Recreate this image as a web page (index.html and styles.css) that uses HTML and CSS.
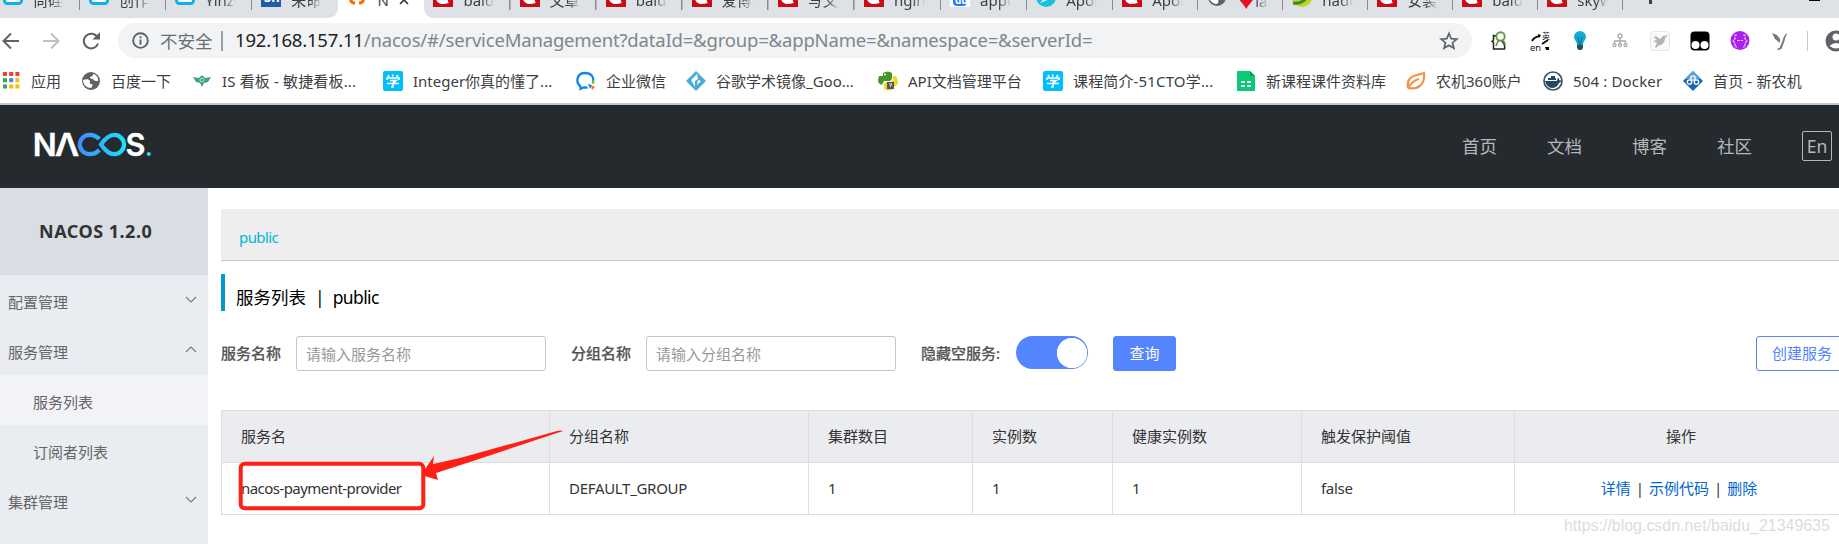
FILE: index.html
```html
<!DOCTYPE html>
<html lang="zh-CN">
<head>
<meta charset="utf-8">
<title>Nacos</title>
<link rel="stylesheet" href="styles.css">
</head>
<body>
<svg class="defs" width="0" height="0">
  <defs>
    <symbol id="card" viewBox="0 0 20 20"><rect x="1.5" y="1.5" width="17" height="17" rx="3" fill="#fff" stroke="#0db1ed" stroke-width="3"/></symbol>
    <symbol id="csdn" viewBox="0 0 20 20"><rect width="20" height="20" fill="#ca0c16"/><path d="M15 7C7 4 5 8 5 11c0 4 4 5 10 3" fill="none" stroke="#fff" stroke-width="4"/></symbol>
    <symbol id="study" viewBox="0 0 20 20"><rect width="20" height="20" rx="2" fill="#00bfff"/><path d="M5 4l1 2M9.500 3.500l.5 2M15 4l-1.500 2M4 9V7h12v2M7 9.500h6l-3 2.500v4H8M4 12.500h12" fill="none" stroke="#fff" stroke-width="1.700"/></symbol>
    <symbol id="globe" viewBox="0 0 20 20"><circle cx="10" cy="10" r="9" fill="#5f6368"/><path d="M2 9c3-1 6-1 7 1 0 2-1 2 1 3 2 0 2 2 0 4-5 0-8-4-8-8zM12 3c0 2-1 2-3 3 0 2 2 2 3 2 1 2 3 2 5 2 1-3-2-7-5-7z" fill="#fff"/></symbol>
  </defs>
</svg>

<div class="tabs">
  <div class="tab"><svg class="fav"><use href="#card"/></svg><span>尚硅谷</span></div>
  <div class="tab"><svg class="fav"><use href="#card"/></svg><span>创作中</span></div>
  <div class="tab"><svg class="fav"><use href="#card"/></svg><span>Yinzo</span></div>
  <div class="tab last"><svg class="fav low" viewBox="0 0 20 20"><rect width="20" height="20" fill="#1f5ea8"/><text x="3" y="15" font-size="13" font-weight="700" fill="#fff">Sn</text></svg><span>未命名</span></div>
  <div class="tab active"><svg class="fav" viewBox="0 0 20 20"><path d="M7 2H5v5l-3 3 2 6q1 2 4 2M13 2h2v5l3 3-2 6q-1 2-4 2" fill="none" stroke="#ff6a00" stroke-width="3"/></svg><span class="name">N</span><svg class="close" viewBox="0 0 10 10"><path d="M1 1l8 8M9 1l-8 8" stroke="#333" stroke-width="1.600"/></svg></div>
  <div class="tab first"><svg class="fav low"><use href="#csdn"/></svg><span>baidu_</span></div>
  <div class="tab"><svg class="fav low"><use href="#csdn"/></svg><span>文章管</span></div>
  <div class="tab"><svg class="fav low"><use href="#csdn"/></svg><span>baidu</span></div>
  <div class="tab"><svg class="fav low"><use href="#csdn"/></svg><span>爱博文</span></div>
  <div class="tab"><svg class="fav low"><use href="#csdn"/></svg><span>写文章</span></div>
  <div class="tab"><svg class="fav low"><use href="#csdn"/></svg><span>nginx</span></div>
  <div class="tab"><svg class="fav low" viewBox="0 0 20 20"><rect width="20" height="20" fill="#fff"/><rect x="3" y="7" width="14" height="12" rx="4" fill="#2979ff"/><text x="5" y="17" font-size="10" font-weight="700" fill="#fff">du</text></svg><span>appoll</span></div>
  <div class="tab"><svg class="fav low" viewBox="0 0 20 20"><circle cx="10" cy="10" r="10" fill="#12c2e0"/><path d="M4 16L15 5l2 6-8 3z" fill="#fff"/></svg><span>Apollo</span></div>
  <div class="tab short"><svg class="fav low"><use href="#csdn"/></svg><span>Apollo</span></div>
  <div class="tab short"><svg class="fav low"><use href="#globe"/></svg><span><i class="gem">♦</i>lan</span></div>
  <div class="tab short"><svg class="fav low" viewBox="0 0 20 20"><circle cx="10" cy="10" r="10" fill="#c2d321"/><path d="M1 16c8 1 13-3 15-9" fill="none" stroke="#3c8c2c" stroke-width="3"/></svg><span>hadoo</span></div>
  <div class="tab short"><svg class="fav low"><use href="#csdn"/></svg><span>安装j</span></div>
  <div class="tab short"><svg class="fav low"><use href="#csdn"/></svg><span>baidu</span></div>
  <div class="tab short"><svg class="fav low"><use href="#csdn"/></svg><span>skywa</span></div>
  <div class="newtab"></div>
  <div class="minimize"></div>
</div>

<div class="toolbar">
  <div class="nav">
    <svg viewBox="0 0 20 20"><path d="M18 10H3M10 2.500L2.500 10l7.500 7.500" fill="none" stroke="#5f6368" stroke-width="2"/></svg>
    <svg viewBox="0 0 20 20"><path d="M2 10h15M10 2.500l7.500 7.500-7.500 7.500" fill="none" stroke="#bdc1c6" stroke-width="2"/></svg>
    <svg viewBox="0 0 20 20"><path d="M16.500 6.500A7.300 7.300 0 1 0 17 12.500" fill="none" stroke="#5f6368" stroke-width="2"/><path d="M19 1v7.500h-7.500z" fill="#5f6368"/></svg>
  </div>
  <div class="omnibox">
    <svg class="info" viewBox="0 0 16 16"><circle cx="8" cy="8" r="6.900" fill="none" stroke="#5f6368" stroke-width="1.800"/><path d="M8 7v5M8 4v1.800" stroke="#5f6368" stroke-width="1.800"/></svg>
    <span class="insecure">不安全</span>
    <span class="divider"></span>
    <span class="url"><b>192.168.157.11</b>/nacos/#/serviceManagement?dataId=&amp;group=&amp;appName=&amp;namespace=&amp;serverId=</span>
    <svg class="star" viewBox="0 0 20 20"><path d="M10 2.500l2.200 5.200 5.600.4-4.300 3.600 1.400 5.500-4.900-3-4.900 3 1.400-5.500L2.200 8.100l5.600-.4z" fill="none" stroke="#5f6368" stroke-width="1.700"/></svg>
  </div>
  <div class="extensions">
    <svg viewBox="0 0 20 20"><path d="M6 5L3.500 4.500v4.500L2 10.500l1.500 1V18H14.500q1-5-3-8" fill="none" stroke="#222" stroke-width="1.500"/><circle cx="10.500" cy="5.500" r="4.200" fill="#fff" stroke="#64973c" stroke-width="1.900"/><path d="M8.500 9L6 15M13 9l2.500 5" stroke="#64973c" stroke-width="1.700"/></svg>
    <svg viewBox="0 0 20 20"><text x="0" y="19.500" font-size="9.500" fill="#111">en</text><text x="12" y="7.500" font-size="8" fill="#111">英</text><path d="M2 10q2-4 8-5M12 13l6-4" fill="none" stroke="#111" stroke-width="2"/><path d="M8 3l3 1-2 3zM15 16h4v3h-3z"/></svg>
    <svg viewBox="0 0 20 20"><path d="M10 0a6 6 0 0 1 6 6c0 3-3 4-3 8H7c0-4-3-5-3-8a6 6 0 0 1 6-6z" fill="#10aad4"/><path d="M7 14h6v3l-1.500 2h-3L7 17z" fill="#285365"/><path d="M8 6l1.500 8M12 6l-1.500 8" stroke="#16627d"/></svg>
    <svg viewBox="0 0 20 20"><g fill="none" stroke="#aaa" stroke-width="1.300"><circle cx="10" cy="5" r="2"/><path d="M10 7v6M4.500 13v-3h11v3"/><circle cx="4.500" cy="14" r="1.500"/><circle cx="10" cy="14" r="1.500"/><circle cx="15.500" cy="14" r="1.500"/></g></svg>
    <svg viewBox="0 0 20 20"><rect x=".5" y=".5" width="19" height="19" rx="3" fill="#fbfbfb" stroke="#e5e5e5"/><path d="M3 3l7 5 3-3 5-1-3 3c0 5-3 7-7 8l-2 2-1-1 2-4-4-2 4-1-4-3h3z" fill="#b4b4b4"/></svg>
    <svg viewBox="0 0 20 20"><rect x=".5" y=".5" width="19" height="19" rx="4" fill="#000"/><circle cx="5.500" cy="14" r="4" fill="#fff"/><circle cx="14.500" cy="14" r="4" fill="#fff"/></svg>
    <svg viewBox="0 0 20 20"><circle cx="10" cy="9.500" r="9.500" fill="#ac20ef"/><path d="M7 4H5v4l-2 2 2 2v4h2M13 4h2v4l2 2-2 2v4h-2M7 9.500h6" fill="none" stroke="#edc6ff" stroke-width="1.200" stroke-dasharray="3 1"/></svg>
    <svg viewBox="0 0 20 20"><path d="M2 2l5 2 3 4v4L5 8zM17.500 2q-4 2-5 8l-3 7-3 1 2 1 3-1 3-8q1-5 3-8z" fill="#777"/></svg>
  </div>
  <span class="rule"></span>
  <svg class="avatar" viewBox="0 0 22 22"><circle cx="11" cy="11" r="10.500" fill="#5f6368"/><circle cx="11" cy="7" r="3.500" fill="#fff"/><path d="M4.500 16q6.500-6 13 0-6 5-13 0z" fill="#fff"/></svg>
</div>

<div class="bookmarks">
  <div><svg class="apps" viewBox="0 0 20 20"><path d="M0 3h16.400" stroke="#ea4335" stroke-width="4" stroke-dasharray="4 2.200"/><path d="M0 9.200h4M0 15.400h4" stroke="#34a853" stroke-width="4"/><path d="M6.200 9.200h4" stroke="#4285f4" stroke-width="4"/><path d="M12.400 9.200h4M6.200 15.400h4M12.400 15.400h4" stroke="#fbbc05" stroke-width="4"/></svg>应用</div>
  <div><svg><use href="#globe"/></svg>百度一下</div>
  <div><svg viewBox="0 0 20 20"><path d="M1 6l6 1q3-5 6 0l6-1-3 5-4 1-2 4-2-4-4-1z" fill="#3da57d"/><circle cx="10" cy="9" r="2" fill="none" stroke="#bce0d0"/></svg><span class="wide">IS 看板 - 敏捷看板...</span></div>
  <div><svg><use href="#study"/></svg>Integer你真的懂了...</div>
  <div><svg viewBox="0 0 20 20"><path d="M4.500 15.500C-1 11 1 2 9 2c6 0 9 4 8 8M4.500 15v3l3-1.500h4" fill="none" stroke="#1485ee" stroke-width="2.300"/><path d="M16 8l3 4-3 1z" fill="#6cc21c"/><path d="M12 13l4 1-2 4z" fill="#138bed"/><path d="M15 14l4 2-3 3z" fill="#ff6c22"/></svg>企业微信</div>
  <div><svg viewBox="0 0 20 20"><path d="M10 0l10 10-10 10L0 10z" fill="#4aaad8"/><path d="M11 3L5 9l4 7V10l3-2zM12 9l3 1-4 4z" fill="#fff"/></svg><span>谷歌学术镜像_Goo...</span></div>
  <div><svg viewBox="0 0 20 20"><path d="M5 5V2q5-3 9 0v6l-2 2H6l-2 4Q0 13 0 9l1-4z" fill="#42992b"/><path d="M15 5h3q4 7 0 10h-3v3q-4 3-9 0v-5l2-2h5l2-2z" fill="#f4d52e"/><path d="M9 11h7v7H9z" fill="#555"/><path d="M11 13h3l-2 3" fill="none" stroke="#eee"/><circle cx="7" cy="3.500" r="1" fill="#fff"/></svg><span>API文档管理平台</span></div>
  <div><svg><use href="#study"/></svg><span class="wide">课程简介-51CTO学...</span></div>
  <div><svg viewBox="0 0 20 20"><path d="M0 0h13l5 5v15H0z" fill="#0acb75"/><path d="M13 0l5 5h-5z" fill="#07a35d"/><path d="M4 11h4m2 0h4M4 15h4m2 0h4" stroke="#fff" stroke-width="2"/></svg><span class="shift">新课程课件资料库</span></div>
  <div><svg viewBox="0 0 20 20"><path d="M2 17C0 4 10 5 18 2c1 11-5 17-16 15M2 17c3-5 7-8 11-9" fill="none" stroke="#f49345" stroke-width="2.200"/></svg><span>农机360账户</span></div>
  <div><svg viewBox="0 0 20 20"><circle cx="10" cy="10" r="9" fill="#fff" stroke="#385466" stroke-width="1.700"/><path d="M2 10h12q0-3 2-3v2l3 1-3 2q-2 5-7 5-5 0-7-7z" fill="#24495f"/><path d="M5 8h8M8 6h4" stroke="#24495f" stroke-width="2"/></svg><span class="wide">504 : Docker</span></div>
  <div><svg viewBox="0 0 20 20"><path d="M10 0l10 10-10 10L0 10z" fill="#1967b0"/><path d="M2 8l8-8 8 8z" fill="#59a6db"/><g fill="none" stroke="#fff" stroke-width="1.300"><circle cx="10" cy="7" r="2.200"/><circle cx="6.500" cy="11" r="2.200"/><circle cx="13.500" cy="11" r="2.200"/></g></svg><span class="wide">首页 - 新农机</span></div>
</div>

<header class="header">
  <svg class="logo" viewBox="0 0 118 28">
    <defs><linearGradient id="flow" gradientUnits="userSpaceOnUse" x1="44" y1="0" x2="92" y2="0"><stop offset="0" stop-color="#4289ff"/><stop offset="1" stop-color="#18e5f6"/></linearGradient></defs>
    <g class="letters"><text x="-1.300" y="26" textLength="24" lengthAdjust="spacingAndGlyphs">N</text><text x="20.800" y="26" textLength="24.500" lengthAdjust="spacingAndGlyphs">Λ</text><text x="91.500" y="26" textLength="20" lengthAdjust="spacingAndGlyphs">S</text></g>
    <path d="M65.300 9C62.500 6 59.500 4.800 55.500 4.800a9.700 9.700 0 0 0 0 19.400c4 0 7-1.200 9.800-4.200M67 14.500q6.500-9.700 13.300-9.700a9.700 9.700 0 0 1 0 19.400q-6.800 0-13.300-9.700z" fill="none" stroke="url(#flow)" stroke-width="4.200"/>
    <circle cx="114.800" cy="24" r="2.100" fill="#18e5f6"/>
  </svg>
  <nav class="links"><a>首页</a><a>文档</a><a>博客</a><a>社区</a><a class="lang">En</a></nav>
</header>

<div class="layout">
  <aside class="sidebar">
    <h1>NACOS 1.2.0</h1>
    <div class="item">配置管理<svg viewBox="0 0 12 8"><path d="M1 1l5 5 5-5"/></svg></div>
    <div class="item">服务管理<svg viewBox="0 0 12 8"><path d="M1 6l5-5 5 5"/></svg></div>
    <div class="item sub current">服务列表</div>
    <div class="item sub">订阅者列表</div>
    <div class="item">集群管理<svg viewBox="0 0 12 8"><path d="M1 1l5 5 5-5"/></svg></div>
  </aside>
  <main class="main">
    <div class="namespace">public</div>
    <h2 class="title"><span>服务列表</span><i>|</i><span class="scope">public</span></h2>
    <form class="search">
      <label>服务名称</label><input placeholder="请输入服务名称">
      <label class="next">分组名称</label><input placeholder="请输入分组名称">
      <label class="next hide">隐藏空服务:</label><span class="switch"></span>
      <button class="query" type="button">查询</button>
      <button class="create" type="button">创建服务</button>
    </form>
    <div class="tablebox">
      <table>
        <colgroup><col class="c1"><col class="c2"><col class="c3"><col class="c4"><col class="c5"><col class="c6"><col class="c7"></colgroup>
        <tr><th>服务名</th><th>分组名称</th><th>集群数目</th><th>实例数</th><th>健康实例数</th><th>触发保护阈值</th><th class="ops">操作</th></tr>
        <tr><td><span class="service">nacos-payment-provider</span></td><td><span class="group">DEFAULT_GROUP</span></td><td>1</td><td>1</td><td>1</td><td><span class="group">false</span></td><td class="ops"><a>详情</a><i>|</i><a>示例代码</a><i>|</i><a>删除</a></td></tr>
      </table>
    </div>
  </main>
</div>
<svg class="marker" viewBox="0 0 340 100"><rect x="10.700" y="43.700" width="182.600" height="44.600" rx="4" fill="none" stroke="#ff2015" stroke-width="4"/><path d="M333 11q-2-1-6 0L230 38l-27 6 1-8-13 19 17 5-2-7 37-12z" fill="#ff2015"/></svg>
<div class="watermark">https://blog.csdn.net/baidu_21349635</div>
</body>
</html>
```
FILE: styles.css
```css
* { box-sizing: border-box; }
body { margin: 0; width: 1839px; height: 544px; overflow: hidden; position: relative; background: #fff; color: #333; font: 15px/20px "Noto Sans", "Noto Sans CJK SC", sans-serif; }
i { font-style: normal; }
svg { flex: none; }
.defs { position: absolute; }

.tabs { display: flex; height: 18px; background: #dee1e6; overflow: hidden; }
.tab { display: flex; flex: none; width: 86.100px; height: 18px; padding-left: 9px; overflow: hidden; background: linear-gradient(#888c91, #888c91) right top / 1.500px 10px no-repeat; font-size: 15px; }
.tab:first-child { margin-left: -6px; }
.tab.short { width: 85px; }
.tab.last { background: radial-gradient(circle at 0 0, transparent 8.500px, #fff 9px) right bottom / 9px 9px no-repeat; }
.tab.active { background: #fff; }
.tab.first { background: linear-gradient(#888c91, #888c91) right top / 1.500px 10px no-repeat, radial-gradient(circle at 100% 0, transparent 8.500px, #fff 9px) left bottom / 9px 9px no-repeat; }
.fav { width: 20px; height: 20px; margin: -15px 10px 0 0; }
.fav.low { margin-top: -13px; }
.tab span { width: 31px; height: 22px; margin-top: -10px; line-height: 20px; overflow: hidden; white-space: nowrap; color: #3c4043; -webkit-mask-image: linear-gradient(90deg, #000 60%, transparent); mask-image: linear-gradient(90deg, #000 60%, transparent); }
.tab .name { width: 16px; -webkit-mask-image: none; mask-image: none; }
.gem { color: #e81123; font-size: 18px; }
.close { width: 10px; height: 10px; margin: -5px 0 0 6px; }
.newtab { width: 3px; height: 4px; margin-left: 26px; background: #3c4043; }
.minimize { width: 11px; height: 1px; margin-left: 157px; background: #000; }

.toolbar { display: flex; align-items: center; height: 45px; }
.nav { display: flex; flex: none; gap: 20px; width: 118px; padding-left: 1px; }
.nav svg { width: 20px; height: 20px; }
.omnibox { display: flex; flex: none; align-items: center; width: 1354px; height: 35px; border-radius: 18px; background: #f1f3f4; padding: 0 13px 0 14px; font-size: 18.500px; line-height: 30px; color: #80868b; }
.info { width: 17px; height: 17px; }
.insecure { width: 52px; margin-left: 11px; font-size: 17.500px; color: #6a6e73; white-space: nowrap; }
.divider { width: 2px; height: 20px; margin: 0 12px 0 9px; background: #9aa0a6; }
.url { flex: 1; white-space: nowrap; letter-spacing: -0.180px; margin-top: -2px; }
.url b { font-weight: 400; color: #202124; }
.star { width: 20px; height: 20px; }
.extensions { display: flex; flex: none; gap: 20px; margin-left: 18px; }
.extensions svg { width: 20px; height: 20px; }
.rule { flex: none; width: 1px; height: 20px; margin: 0 17px 0 17px; background: #c8cacc; }
.avatar { width: 22px; height: 22px; }

.bookmarks { display: grid; grid-template-columns: 79px 110px 191px 193px 110px 192px 165px 194px 169px 137px 140px 156px; align-items: center; height: 40px; padding: 0 0 4px 3px; color: #3c4043; }
.bookmarks div { display: flex; align-items: center; gap: 10px; white-space: nowrap; line-height: 18px; }
.bookmarks div:nth-child(2) { margin-left: -1px; }
.bookmarks svg { width: 20px; height: 20px; }
.bookmarks .apps { margin-right: -2px; }
.wide { letter-spacing: 0.150px; }
.shift { margin-left: -1px; }

.header { display: flex; height: 85px; border-top: 2px solid #c7c7c7; background: #252a2f; justify-content: space-between; }
.logo { width: 118px; height: 28px; margin: 25px 0 0 34px; }
.letters { font: 600 31.500px "Inter", sans-serif; fill: #fff; stroke: #fff; stroke-width: 0.300px; }
.links { display: flex; align-items: center; gap: 50px; padding: 0 7px 2px 0; font-size: 17.500px; color: #b5b8ba; }
.lang { width: 30px; height: 30px; border: 1px solid #b5b8ba; border-radius: 2px; line-height: 28px; text-align: center; }

.layout { display: flex; height: 356px; }
.sidebar { flex: none; width: 208px; background: #e9ecf1; color: #666; }
.sidebar h1 { margin: 0; height: 87px; padding-left: 39px; background: #d9dde4; font: 700 18px/87px "Noto Sans", sans-serif; letter-spacing: 0.500px; color: #333; }
.item { display: flex; align-items: center; justify-content: space-between; height: 50px; padding: 3px 11px 0 8px; }
.item.sub { padding-left: 33px; }
.item.current { background: #f2f3f7; }
.item svg { width: 12px; height: 8px; fill: none; stroke: #777; stroke-width: 1.100; margin-top: -3px; }
.main { flex: 1; min-width: 0; padding: 21px 0 0 13px; }
.namespace { height: 52px; padding-left: 18px; border-bottom: 1px solid #c8c8c8; background: #eee; line-height: 57px; letter-spacing: -0.600px; color: #00b7d3; }
.title { display: flex; align-items: flex-end; gap: 8px; height: 37px; margin: 13px 0 25px; padding-left: 11px; border-left: 4px solid #09c; font-size: 17.500px; font-weight: 400; line-height: 27px; color: #000; }
.title i { margin-left: 1px; }
.scope { letter-spacing: -0.600px; }
.search { display: flex; height: 35px; align-items: flex-start; }
.search > * { flex: none; }
.search label { width: 60px; margin-right: 15px; line-height: 34px; font-weight: 500; color: #555; white-space: nowrap; }
.search .next { margin-left: 25px; }
.search .hide { width: 80px; }
.search input { width: 250px; height: 35px; padding: 0 9px; border: 1px solid #c4c6cf; border-radius: 3px; font: inherit; }
.search input::placeholder { color: #999; }
.search label { -webkit-text-stroke: 0.200px #555; }
.switch { width: 72px; height: 33px; border-radius: 17px; background: radial-gradient(circle at 56px 17px, #fff 14.800px, #5584ff 15.500px); }
.query, .create { height: 35px; border: 1px solid #5584ff; border-radius: 3px; font: inherit; padding: 0 0 2px; white-space: nowrap; }
.query { width: 63px; margin-left: 25px; background: #5584ff; color: #fff; }
.create { width: 92px; margin-left: 580px; background: #fff; color: #5584ff; }
.tablebox { margin-top: 39px; overflow: hidden; }
table { width: 1628px; table-layout: fixed; border-collapse: collapse; }
.c1 { width: 328px; } .c2 { width: 259px; } .c3 { width: 164px; } .c4 { width: 140px; } .c5 { width: 189px; } .c6 { width: 213px; } .c7 { width: 335px; }
th, td { height: 52px; padding: 0 0 2px 19px; border: 1px solid #dcdee3; text-align: left; font-weight: 400; white-space: nowrap; }
th { background: #ebecf0; }
.service { letter-spacing: -0.550px; }
.group { letter-spacing: -0.300px; }
td a { color: #06c; }
th.ops { padding: 0 2px 2px 0; text-align: center; }
td.ops { padding: 0 6px 2px 0; text-align: center; }
.ops i { margin: 0 5px; }
.marker { position: absolute; left: 230px; top: 420px; width: 340px; height: 100px; }
.watermark { position: absolute; left: 1564px; top: 515px; font: 15.950px/22px "Liberation Sans", sans-serif; color: #dcdcdc; white-space: nowrap; }
```
